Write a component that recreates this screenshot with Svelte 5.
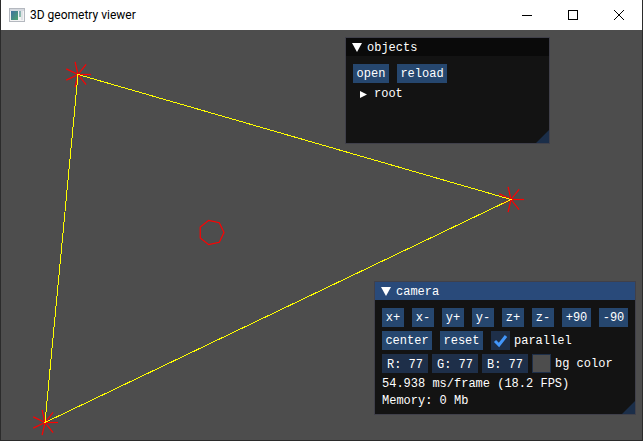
<script>
  let objectsOpen = $state(true);
  let cameraOpen = $state(true);
  let parallel = $state(true);
  let channels = $state(['R: 77', 'G: 77', 'B: 77']);
  let background = $state('#4d4d4d');

  const moves = ['x+', 'x-', 'y+', 'y-', 'z+', 'z-', '+90', '-90'];
  const vertices = [[78, 74], [511, 199], [45, 422]];

  // Corners of a regular heptagon.
  const heptagon = (cx, cy, r) =>
    Array.from({ length: 7 }, (_, i) => {
      const a = (i * 2 * Math.PI) / 7;
      return [cx + r * Math.cos(a), cy - r * Math.sin(a)];
    });
</script>

{#snippet action(text)}
  <button class="btn" style:width="{text.length * 7 + 8}px">{text}</button>
{/snippet}

<div class="app">
  <header>
    <svg class="logo" width="16" height="14" viewBox="0 0 16 14" aria-hidden="true">
      <rect x="0.5" y="0.5" width="15" height="13" fill="#f4f4f4" stroke="#b4b8bf" />
      <rect x="1" y="1" width="14" height="2" fill="#d5d9df" />
      <rect x="2" y="3" width="7" height="9" fill="url(#teal)" />
      <rect x="10" y="3" width="2" height="6" fill="url(#teal)" opacity="0.6" />
      <rect x="12" y="3" width="2" height="9" fill="#dfe2e6" />
      <defs>
        <linearGradient id="teal" x1="0" y1="0" x2="1" y2="1">
          <stop offset="0" stop-color="#3f70a0" />
          <stop offset="1" stop-color="#4fa56f" />
        </linearGradient>
      </defs>
    </svg>
    <h1>3D geometry viewer</h1>
    <div class="controls">
      <button aria-label="Minimize"><svg width="12" height="12"><path d="M1 6.5H11" /></svg></button>
      <button aria-label="Maximize"><svg width="12" height="12"><path d="M1.5 1.5H10.5V10.5H1.5Z" /></svg></button>
      <button aria-label="Close"><svg width="12" height="12"><path class="smooth" d="M1 1L11 11M11 1L1 11" /></svg></button>
    </div>
  </header>

  <main style:background>
    <svg class="scene" viewBox="0 30 643 411" preserveAspectRatio="xMinYMin slice" aria-hidden="true">
      {#each vertices as [x, y]}
        {#each heptagon(x, y + 0.5, 13) as [ex, ey]}
          <line class="mark" x1={x} y1={y + 0.5} x2={ex} y2={ey} />
        {/each}
      {/each}
      <polygon class="edges" points="78,74.5 511,199.5 45,422.5" />
      <polygon class="mark" points={heptagon(211.5, 232.5, 12.5).map((p) => p.join()).join(' ')} />
    </svg>

    <section class="panel objects">
      <button class="title" onclick={() => (objectsOpen = !objectsOpen)}>
        <svg width="10" height="9"><path d="M0 0H10L5 9Z" /></svg>objects
      </button>
      {#if objectsOpen}
        <div class="body">
          <div class="row">
            {@render action('open')}
            {@render action('reload')}
          </div>
          <button class="node"><svg width="7" height="7"><path d="M0 0L7 3.5L0 7Z" /></svg>root</button>
        </div>
      {/if}
      <span class="grip"></span>
    </section>

    <section class="panel camera">
      <button class="title" onclick={() => (cameraOpen = !cameraOpen)}>
        <svg width="10" height="9"><path d="M0 0H10L5 9Z" /></svg>camera
      </button>
      {#if cameraOpen}
        <div class="body">
          <div class="row">
            {#each moves as move}{@render action(move)}{/each}
          </div>
          <div class="row">
            {@render action('center')}
            {@render action('reset')}
            <label>
              <span class="check">
                <input type="checkbox" bind:checked={parallel} />
                {#if parallel}<svg width="19" height="19"><path d="M4 10L8 14L15 5" /></svg>{/if}
              </span>
              <span class="caption">parallel</span>
            </label>
          </div>
          <div class="row tight">
            {#each channels as _, i}
              <input class="field" type="text" aria-label={['Red', 'Green', 'Blue'][i]} bind:value={channels[i]} />
            {/each}
            <label>
              <input class="swatch" type="color" bind:value={background} />
              <span class="caption">bg color</span>
            </label>
          </div>
          <p>54.938 ms/frame (18.2 FPS)</p>
          <p>Memory: 0 Mb</p>
        </div>
      {/if}
      <span class="grip"></span>
    </section>
  </main>
</div>

<style>
  .app {
    box-sizing: border-box;
    display: flex;
    flex-direction: column;
    height: 100vh;
    border: 1px solid #2b2b2b;
    border-top: 0;
    background: #fff;
  }
  header {
    display: flex;
    align-items: center;
    height: 30px;
    padding-left: 8px;
  }
  .logo { margin-right: 5px; }
  h1 {
    margin: 0;
    flex: 1;
    font: 400 12px/16px Roboto, sans-serif;
    color: #000;
  }
  button, input {
    box-sizing: border-box;
    margin: 0;
    border: 0;
    border-radius: 0;
    font: inherit;
    color: inherit;
  }
  .controls { display: flex; }
  .controls button {
    display: flex;
    align-items: center;
    justify-content: center;
    width: 46px;
    height: 28px;
    padding: 0;
    background: none;
  }
  .controls path { fill: none; stroke: #000; shape-rendering: crispEdges; }
  .controls .smooth { shape-rendering: auto; }
  main {
    position: relative;
    flex: 1;
    overflow: hidden;
    font: 12px/13px "Liberation Mono", monospace;
    color: #fff;
  }
  .scene {
    position: absolute;
    top: 0;
    left: -1px;
    width: 100vw;
    fill: none;
  }
  .edges { stroke: #ff0; shape-rendering: crispEdges; }
  .mark { stroke: #f00; stroke-width: 1.2; }
  .panel {
    position: absolute;
    box-sizing: border-box;
    border: 1px solid #40404a;
    background: #131313;
  }
  .objects { left: 344px; top: 7px; width: 205px; height: 107px; }
  .camera { right: 6px; top: 251px; width: 262px; height: 134px; }
  .title {
    display: flex;
    align-items: center;
    gap: 5px;
    width: 100%;
    height: 18px;
    padding: 2px 6px 0;
    background: #0a0a0a;
  }
  .title svg { margin-bottom: 2px; }
  .camera .title { background: #294a7a; }
  svg { flex: none; }
  .title path, .node path { fill: #fff; }
  .body {
    display: flex;
    flex-direction: column;
    align-items: flex-start;
    gap: 4px;
    padding: 8px 7px;
    white-space: nowrap;
  }
  .row { display: flex; gap: 8px; }
  .tight { gap: 4px; }
  .btn {
    display: flex;
    align-items: center;
    justify-content: center;
    height: 19px;
    padding: 2px 0 0;
    background: #26476f;
  }
  .node {
    display: flex;
    align-items: center;
    gap: 7px;
    padding: 1px 7px 0;
    background: none;
  }
  label { display: flex; align-items: center; gap: 4px; }
  .caption { padding-top: 2px; }
  .check { position: relative; width: 19px; height: 19px; }
  .check input {
    appearance: none;
    display: block;
    width: 19px;
    height: 19px;
    background: #1e2f49;
  }
  .check svg { position: absolute; inset: 0; pointer-events: none; }
  .check path { fill: none; stroke: #4296fa; stroke-width: 3; }
  .field {
    width: 46px;
    height: 19px;
    padding: 2px 0 0;
    text-align: center;
    background: #1e2f49;
  }
  .swatch {
    appearance: none;
    width: 19px;
    height: 19px;
    padding: 0;
    border: 1px solid #1e2f49;
    background: #4d4d4d;
  }
  .swatch::-webkit-color-swatch-wrapper { padding: 0; }
  .swatch::-webkit-color-swatch { border: 0; border-radius: 0; }
  p { margin: 0; padding-top: 1px; line-height: 12px; }
  .grip {
    position: absolute;
    right: 0;
    bottom: 0;
    width: 13px;
    height: 13px;
    background: #1b2e49;
    clip-path: polygon(100% 0, 100% 100%, 0 100%);
  }
</style>
